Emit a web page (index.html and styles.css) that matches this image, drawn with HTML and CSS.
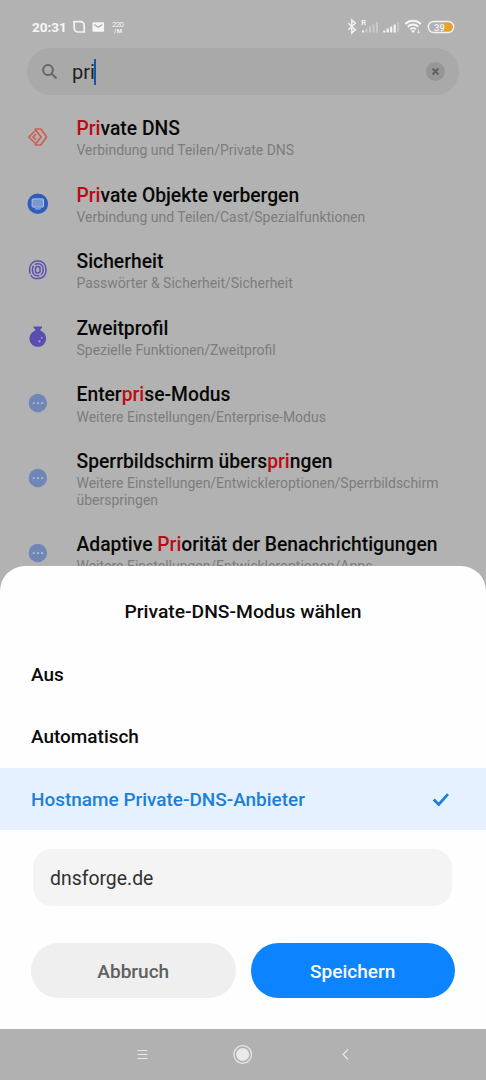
FILE: index.html
```html
<!DOCTYPE html>
<html lang="de">
<head>
<meta charset="utf-8">
<title>Private DNS</title>
<link rel="stylesheet" href="styles.css">
</head>
<body>
<div class="phone">
  <header class="status">
    <span class="clock">20:31</span>
    <svg class="status-left" width="58" height="18" viewBox="0 0 58 18" fill="none">
      <path d="M2 3.700h7.500a3.700 3.700 0 0 1 3.700 3.700v6.800M3.200 3.700v6.300a4 4 0 0 0 4 4h7" stroke="#f4f4f4" stroke-width="1.700"/>
      <rect x="21.500" y="4.200" width="11.600" height="9.500" rx=".8" fill="#f5f5f5"/>
      <path d="M23.300 6.400l4 2.800 4-2.800" stroke="#aaa" stroke-width="1.200"/>
      <text x="41" y="8.800" class="rate" textLength="12">220</text>
      <text x="43" y="15" class="rate-unit" textLength="8">/M</text>
    </svg>
    <svg class="status-right" width="110" height="20" viewBox="0 0 110 20" fill="none">
      <path d="M1.300 6.200l7 6.500-3.500 3.300V3l3.500 3.300-7 6.500" stroke="#f3f3f3" stroke-width="1.500"/>
      <text x="14.300" y="7.500" class="roam">R</text>
      <path d="M16 15.500v-2" stroke="#f3f3f3" stroke-width="2"/>
      <path d="M19.500 15.500v-4M23 15.500V9.500M26.500 15.500V7.500M30 15.500V5" stroke="#c9c9c9" stroke-width="2"/>
      <path d="M37.200 15.500v-2M40.700 15.500v-4M44.200 15.500v-6M47.700 15.500v-8" stroke="#f3f3f3" stroke-width="2.200"/>
      <path d="M51.200 15.500V5" stroke="#c4c4c4" stroke-width="2"/>
      <path d="M58.300 7a11 11 0 0 1 15.500 0M60.800 9.700a7.500 7.500 0 0 1 10.500 0M63.300 12.200a4 4 0 0 1 5.500 0" stroke="#f5f5f5" stroke-width="1.900"/>
      <path d="M63.900 13.500h4.400l-2.200 2.500z" fill="#f5f5f5"/>
      <path d="M71.600 12.200v4M70.500 14.900l1.100 1.300 1.100-1.300" stroke="#eee" stroke-width=".8"/>
      <path d="M93.500 5h4.200a5 5 0 0 1 0 10h-4.200z" transform="translate(3)" fill="#e5a329"/>
      <rect x="81.300" y="4.500" width="25.400" height="11" rx="5.500" stroke="#f3f3f3" stroke-width="1.400"/>
      <text x="87" y="13.500" class="battery">39</text>
    </svg>
  </header>

  <div class="search">
    <svg class="lens" width="18" height="18" viewBox="0 0 18 18" fill="none" stroke="#666" stroke-width="2"><circle cx="7" cy="7" r="4.900"/><path d="M10.500 10.500l5 5"/></svg>
    <span class="query">pri</span><span class="caret"></span>
    <svg class="clear" width="20" height="20" viewBox="0 0 20 20"><circle cx="10.500" cy="9.500" r="9.500" fill="#979797"/><path d="M7.500 6.500l6 6M13.500 6.500l-6 6" stroke="#606060" stroke-width="1.900"/></svg>
  </div>

  <main class="results">
    <div class="row">
      <svg class="icon" width="22" height="22" viewBox="0 0 22 22" fill="none" stroke="#cc5f50" stroke-width="1.700" stroke-linejoin="round"><path d="M8 5L1.800 11 8 17M9 8l-3 3 3 3M7.800 3h6l5.800 8-5.800 8h-6M7.800 3L14.200 11l-6.400 8"/></svg>
      <div class="copy"><div class="name"><b>Pri</b>vate DNS</div><div class="path">Verbindung und Teilen/Private DNS</div></div>
    </div>
    <div class="row">
      <svg class="icon" width="22" height="22" viewBox="0 0 22 22" fill="none"><circle cx="10.800" cy="10.700" r="10.300" fill="#2f5dbd"/><rect x="5.100" y="5.900" width="11.400" height="8.200" rx="1" fill="#7999ce" stroke="#b4c2dc"/><path d="M7.800 15.900h6" stroke="#b4c2dc"/></svg>
      <div class="copy"><div class="name"><b>Pri</b>vate Objekte verbergen</div><div class="path">Verbindung und Teilen/Cast/Spezialfunktionen</div></div>
    </div>
    <div class="row">
      <svg class="icon" width="22" height="22" viewBox="0 0 22 22" fill="none" stroke="#5b51b0" stroke-width="1.500"><rect x="2.700" y="2" width="16.200" height="17.600" rx="7.500" stroke-dasharray="36 1.500"/><rect x="5.500" y="4.800" width="10.600" height="12" rx="5" stroke-dasharray="15 1.500"/><rect x="8.500" y="7.500" width="4.600" height="6.600" rx="2.300"/></svg>
      <div class="copy"><div class="name">Sicherheit</div><div class="path">Passwörter &amp; Sicherheit/Sicherheit</div></div>
    </div>
    <div class="row">
      <svg class="icon" width="22" height="22" viewBox="0 0 22 22"><path d="M6.600.5H15V2l-1.500 1v1.700a8.300 8.300 0 1 1-5.400 0V3L6.600 2z" fill="#584eb0"/><circle cx="12.500" cy="15.300" r="1.100" fill="#aaa5c8"/><circle cx="14.800" cy="11.800" r=".9" fill="#aaa5c8"/></svg>
      <div class="copy"><div class="name">Zweitprofil</div><div class="path">Spezielle Funktionen/Zweitprofil</div></div>
    </div>
    <div class="row">
      <svg class="icon" width="22" height="22" viewBox="0 0 22 22"><circle cx="10.800" cy="11" r="9.200" fill="#7086b6"/><path d="M5.800 10.200h2v1.700h-2zM10 10.200h2v1.700h-2zM14.200 10.200h2v1.700h-2z" fill="#b0bad0"/></svg>
      <div class="copy"><div class="name">Enter<b>pri</b>se-Modus</div><div class="path">Weitere Einstellungen/Enterprise-Modus</div></div>
    </div>
    <div class="row">
      <svg class="icon" width="22" height="22" viewBox="0 0 22 22"><circle cx="10.800" cy="11" r="9.200" fill="#7086b6"/><path d="M5.800 10.200h2v1.700h-2zM10 10.200h2v1.700h-2zM14.200 10.200h2v1.700h-2z" fill="#b0bad0"/></svg>
      <div class="copy"><div class="name">Sperrbildschirm übers<b>pri</b>ngen</div><div class="path">Weitere Einstellungen/Entwickleroptionen/Sperrbildschirm<br>überspringen</div></div>
    </div>
    <div class="row">
      <svg class="icon" width="22" height="22" viewBox="0 0 22 22"><circle cx="10.800" cy="11" r="9.200" fill="#7086b6"/><path d="M5.800 10.200h2v1.700h-2zM10 10.200h2v1.700h-2zM14.200 10.200h2v1.700h-2z" fill="#b0bad0"/></svg>
      <div class="copy"><div class="name">Adaptive <b>Pri</b>orität der Benachrichtigungen</div><div class="path">Weitere Einstellungen/Entwickleroptionen/Apps</div></div>
    </div>
  </main>

  <section class="sheet">
    <h1 class="sheet-title">Private-DNS-Modus wählen</h1>
    <div class="option">Aus</div>
    <div class="option">Automatisch</div>
    <div class="option selected">Hostname Private-DNS-Anbieter
      <svg width="18" height="16" viewBox="0 0 18 16" fill="none" stroke="#1b7fda" stroke-width="2.700"><path d="M1.700 7.500l5 5L16 2.200"/></svg>
    </div>
    <div class="host"><span>dnsforge.de</span></div>
    <div class="actions">
      <div class="button cancel"><span>Abbruch</span></div>
      <div class="button save"><span>Speichern</span></div>
    </div>
  </section>

  <nav class="nav">
    <svg width="486" height="51" viewBox="0 0 486 51" fill="none" stroke="#e9e9e9">
      <path d="M137.500 21.500h10M137.500 25.500h10M137.500 29.500h10" stroke-width="1.200"/>
      <circle cx="242.700" cy="25.500" r="8.800" stroke-width="1.200"/><circle cx="242.700" cy="25.500" r="6.500" fill="#e9e9e9" stroke="none"/>
      <path d="M348 20.500l-5 5 5 5" stroke-width="1.200"/>
    </svg>
  </nav>
</div>
</body>
</html>
```

FILE: styles.css
```css
* { box-sizing: border-box; }
body { margin: 0; font-family: Roboto, "Noto Sans", sans-serif; background: #b2b2b2; }
.phone { position: relative; width: 486px; height: 1080px; overflow: hidden; background: #b2b2b2; }

.status { display: flex; align-items: center; height: 48px; padding: 6px 29px 0 32px; }
.clock { width: 34px; font-size: 13.5px; font-weight: 700; color: #f7f7f7; white-space: nowrap; }
.status-left { margin-left: 5px; }
.status-right { margin-left: auto; }
.status text { fill: #f3f3f3; }
.rate { font-size: 8px; }
.rate-unit { font-size: 6px; font-weight: 700; }
.roam { font-size: 7.5px; font-weight: 700; }
.battery { font-size: 9.5px; font-weight: 500; }

.search { display: flex; align-items: center; height: 47px; margin: 0 27px; padding: 0 14px; border-radius: 24px; background: #a9a9a9; }
.query { margin-left: 13px; font-size: 20px; color: #202020; }
.caret { width: 2px; height: 26px; margin-left: -1px; background: #1257a8; }
.clear { margin-left: auto; }

.results { padding-top: 8.700px; }
.row { display: flex; align-items: center; padding: 0 20px 0 27px; }
.icon { flex: none; margin-right: 27.500px; }
.copy { padding: 13.300px 0 11.500px; white-space: nowrap; }
.name { line-height: 23.400px; font-size: 19.300px; font-weight: 500; color: #080808; }
.name b { font-weight: 500; color: #bd0b12; }
.path { margin-top: 1.800px; font-size: 13.980px; line-height: 16.600px; color: #7c7c7c; }

.sheet { position: absolute; left: 0; right: 0; top: 566px; height: 463px; border-radius: 25px 25px 0 0; background: #fefefe; }
.sheet-title { margin: 0; padding-top: 14px; height: 77px; line-height: 63px; font-size: 19.280px; font-weight: 500; text-align: center; color: #0c0c0c; }
.option { display: flex; align-items: center; justify-content: space-between; height: 62.300px; padding: 1px 36px 0 31px; font-size: 18.970px; font-weight: 500; color: #0a0a0a; }
.selected { padding-top: 2px; background: #e5f1fe; color: #1b7fda; }
.host { display: flex; align-items: center; height: 57px; margin: 19.100px 34px 0 33px; padding: 2px 17px 0; border-radius: 19px; background: #f4f4f4; font-size: 19.400px; color: #303030; }
.actions { display: flex; gap: 15px; margin: 37px 31px 0; }
.button { display: flex; flex: 1; align-items: center; justify-content: center; height: 55px; padding-top: 2px; border-radius: 28px; font-size: 19.050px; font-weight: 500; }
.cancel { background: #efefef; color: #606060; }
.save { background: #0d84ff; color: #f5fbff; }

.nav { position: absolute; left: 0; right: 0; top: 1029px; height: 51px; background: #b1b1b1; }
```
